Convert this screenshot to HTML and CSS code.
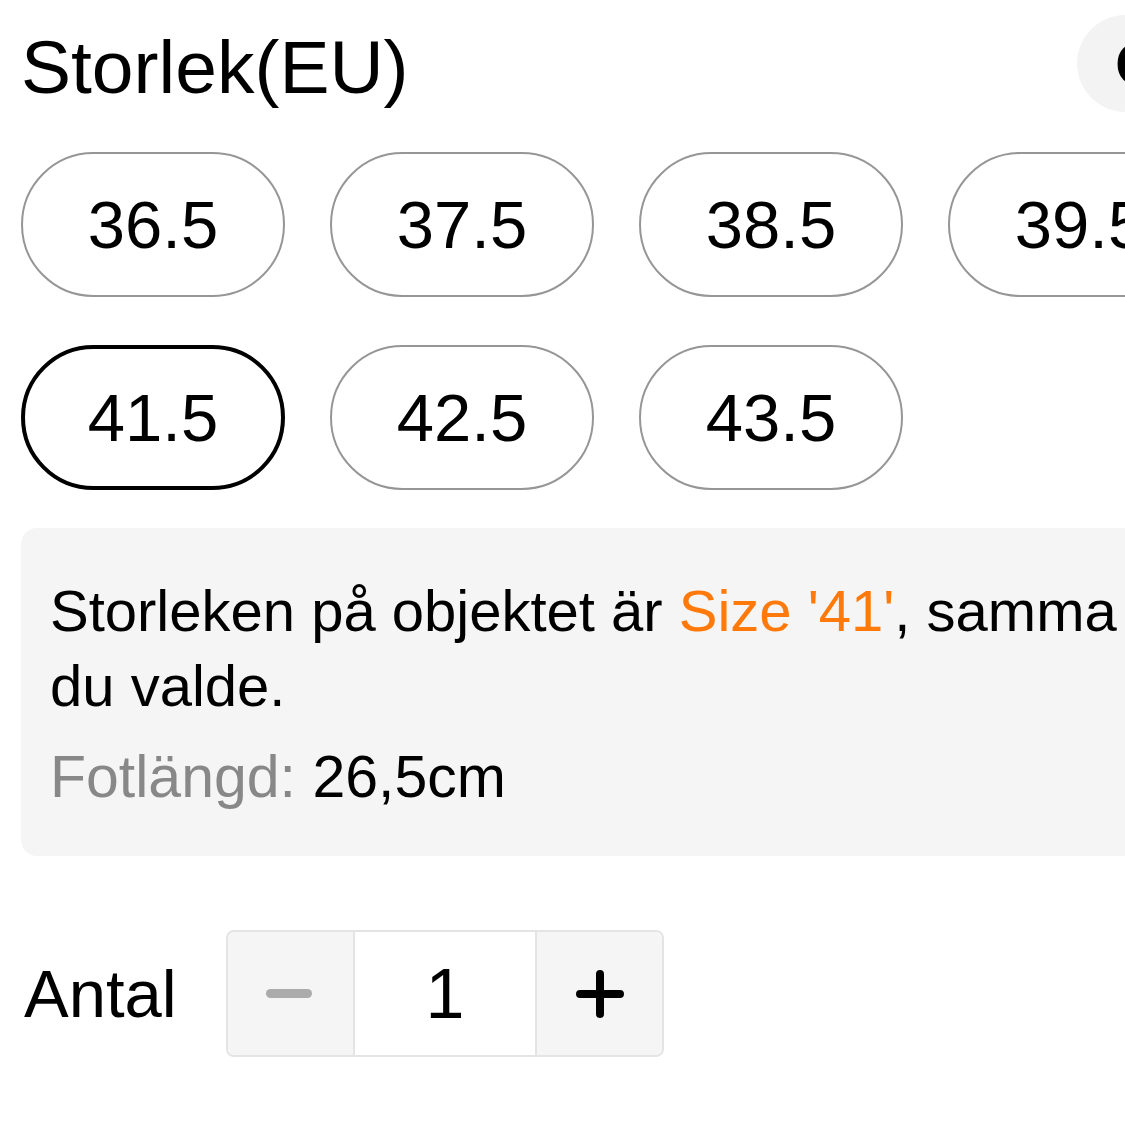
FILE: index.html
```html
<!DOCTYPE html>
<html lang="sv">
<head>
<meta charset="utf-8">
<title>Storlek</title>
<link rel="stylesheet" href="styles.css">
</head>
<body>
<div class="page">
  <header class="header">
    <h1 class="title">Storlek(EU)</h1>
    <button class="guide">Omvandla</button>
  </header>

  <div class="sizes">
    <button class="size">36.5</button>
    <button class="size">37.5</button>
    <button class="size">38.5</button>
    <button class="size">39.5</button>
    <button class="size selected">41.5</button>
    <button class="size">42.5</button>
    <button class="size">43.5</button>
  </div>

  <div class="info">
    <p class="info-text">Storleken på objektet är <span class="hl">Size '41'</span>, samma som du valde.</p>
    <p class="info-foot"><span class="muted">Fotlängd:</span> 26,5cm</p>
  </div>

  <div class="qty">
    <span class="qty-label">Antal</span>
    <div class="stepper">
      <div class="step minus"><span class="bar"></span></div>
      <div class="step value">1</div>
      <div class="step plus">
        <svg width="48" height="48" viewBox="0 0 48 48"><path d="M24 4v40M4 24h40" stroke="#000" stroke-width="8" stroke-linecap="round" fill="none"/></svg>
      </div>
    </div>
  </div>
</div>
</body>
</html>
```

FILE: styles.css
```css
html, body {
  margin: 0;
  padding: 0;
  background: #fff;
  overflow: hidden;
}
body {
  font-family: "Liberation Sans", Arial, Helvetica, sans-serif;
  color: #000;
  width: 1125px;
  height: 1125px;
}
.page {
  width: 1400px;
  box-sizing: border-box;
  padding: 15px 0 0 21px;
}
.header {
  display: flex;
  align-items: flex-start;
  height: 97px;
  margin-bottom: 40px;
}
.title {
  margin: 4px 0 0 0;
  font-size: 75px;
  font-weight: 400;
  line-height: 97px;
  color: #000;
}
.guide {
  margin-left: auto;
  width: 323px;
  height: 97px;
  border: none;
  border-radius: 49px 0 0 49px;
  background: #f3f3f3;
  font-family: inherit;
  font-size: 62px;
  font-weight: 700;
  color: #000;
  text-align: left;
  padding: 0 0 0 38px;
  white-space: nowrap;
  overflow: hidden;
}
.sizes {
  display: grid;
  grid-template-columns: repeat(4, 264px);
  column-gap: 45px;
  row-gap: 48px;
  margin-bottom: 38px;
}
.size {
  height: 145px;
  box-sizing: border-box;
  border: 2px solid #969696;
  border-radius: 73px;
  background: #fff;
  font-family: inherit;
  font-size: 67px;
  color: #000;
  display: flex;
  align-items: center;
  justify-content: center;
  padding: 0;
}
.size.selected {
  border: 4px solid #000;
}
.info {
  width: 1298px;
  box-sizing: border-box;
  background: #f5f5f5;
  border-radius: 16px;
  padding: 45px 29px 41px 29px;
}
.info-text {
  margin: 0 0 17px 0;
  font-size: 58px;
  line-height: 75px;
}
.hl {
  color: #ff7a0a;
}
.info-foot {
  margin: 0;
  font-size: 59px;
  line-height: 75px;
}
.muted {
  color: #888;
}
.qty {
  display: flex;
  align-items: center;
  margin-top: 74px;
}
.qty-label {
  width: 202px;
  padding-left: 3px;
  font-size: 67px;
}
.stepper {
  display: flex;
  height: 127px;
  box-sizing: border-box;
  border: 2px solid #e4e4e4;
  border-radius: 8px;
  overflow: hidden;
}
.step {
  display: flex;
  align-items: center;
  justify-content: center;
}
.minus, .plus {
  width: 125px;
  background: #f5f5f5;
}
.value {
  width: 180px;
  background: #fff;
  border-left: 2px solid #e4e4e4;
  border-right: 2px solid #e4e4e4;
  font-size: 70px;
  color: #000;
}
.bar {
  width: 46px;
  height: 9px;
  border-radius: 5px;
  background: #ababab;
  margin-left: -4px;
}
```
